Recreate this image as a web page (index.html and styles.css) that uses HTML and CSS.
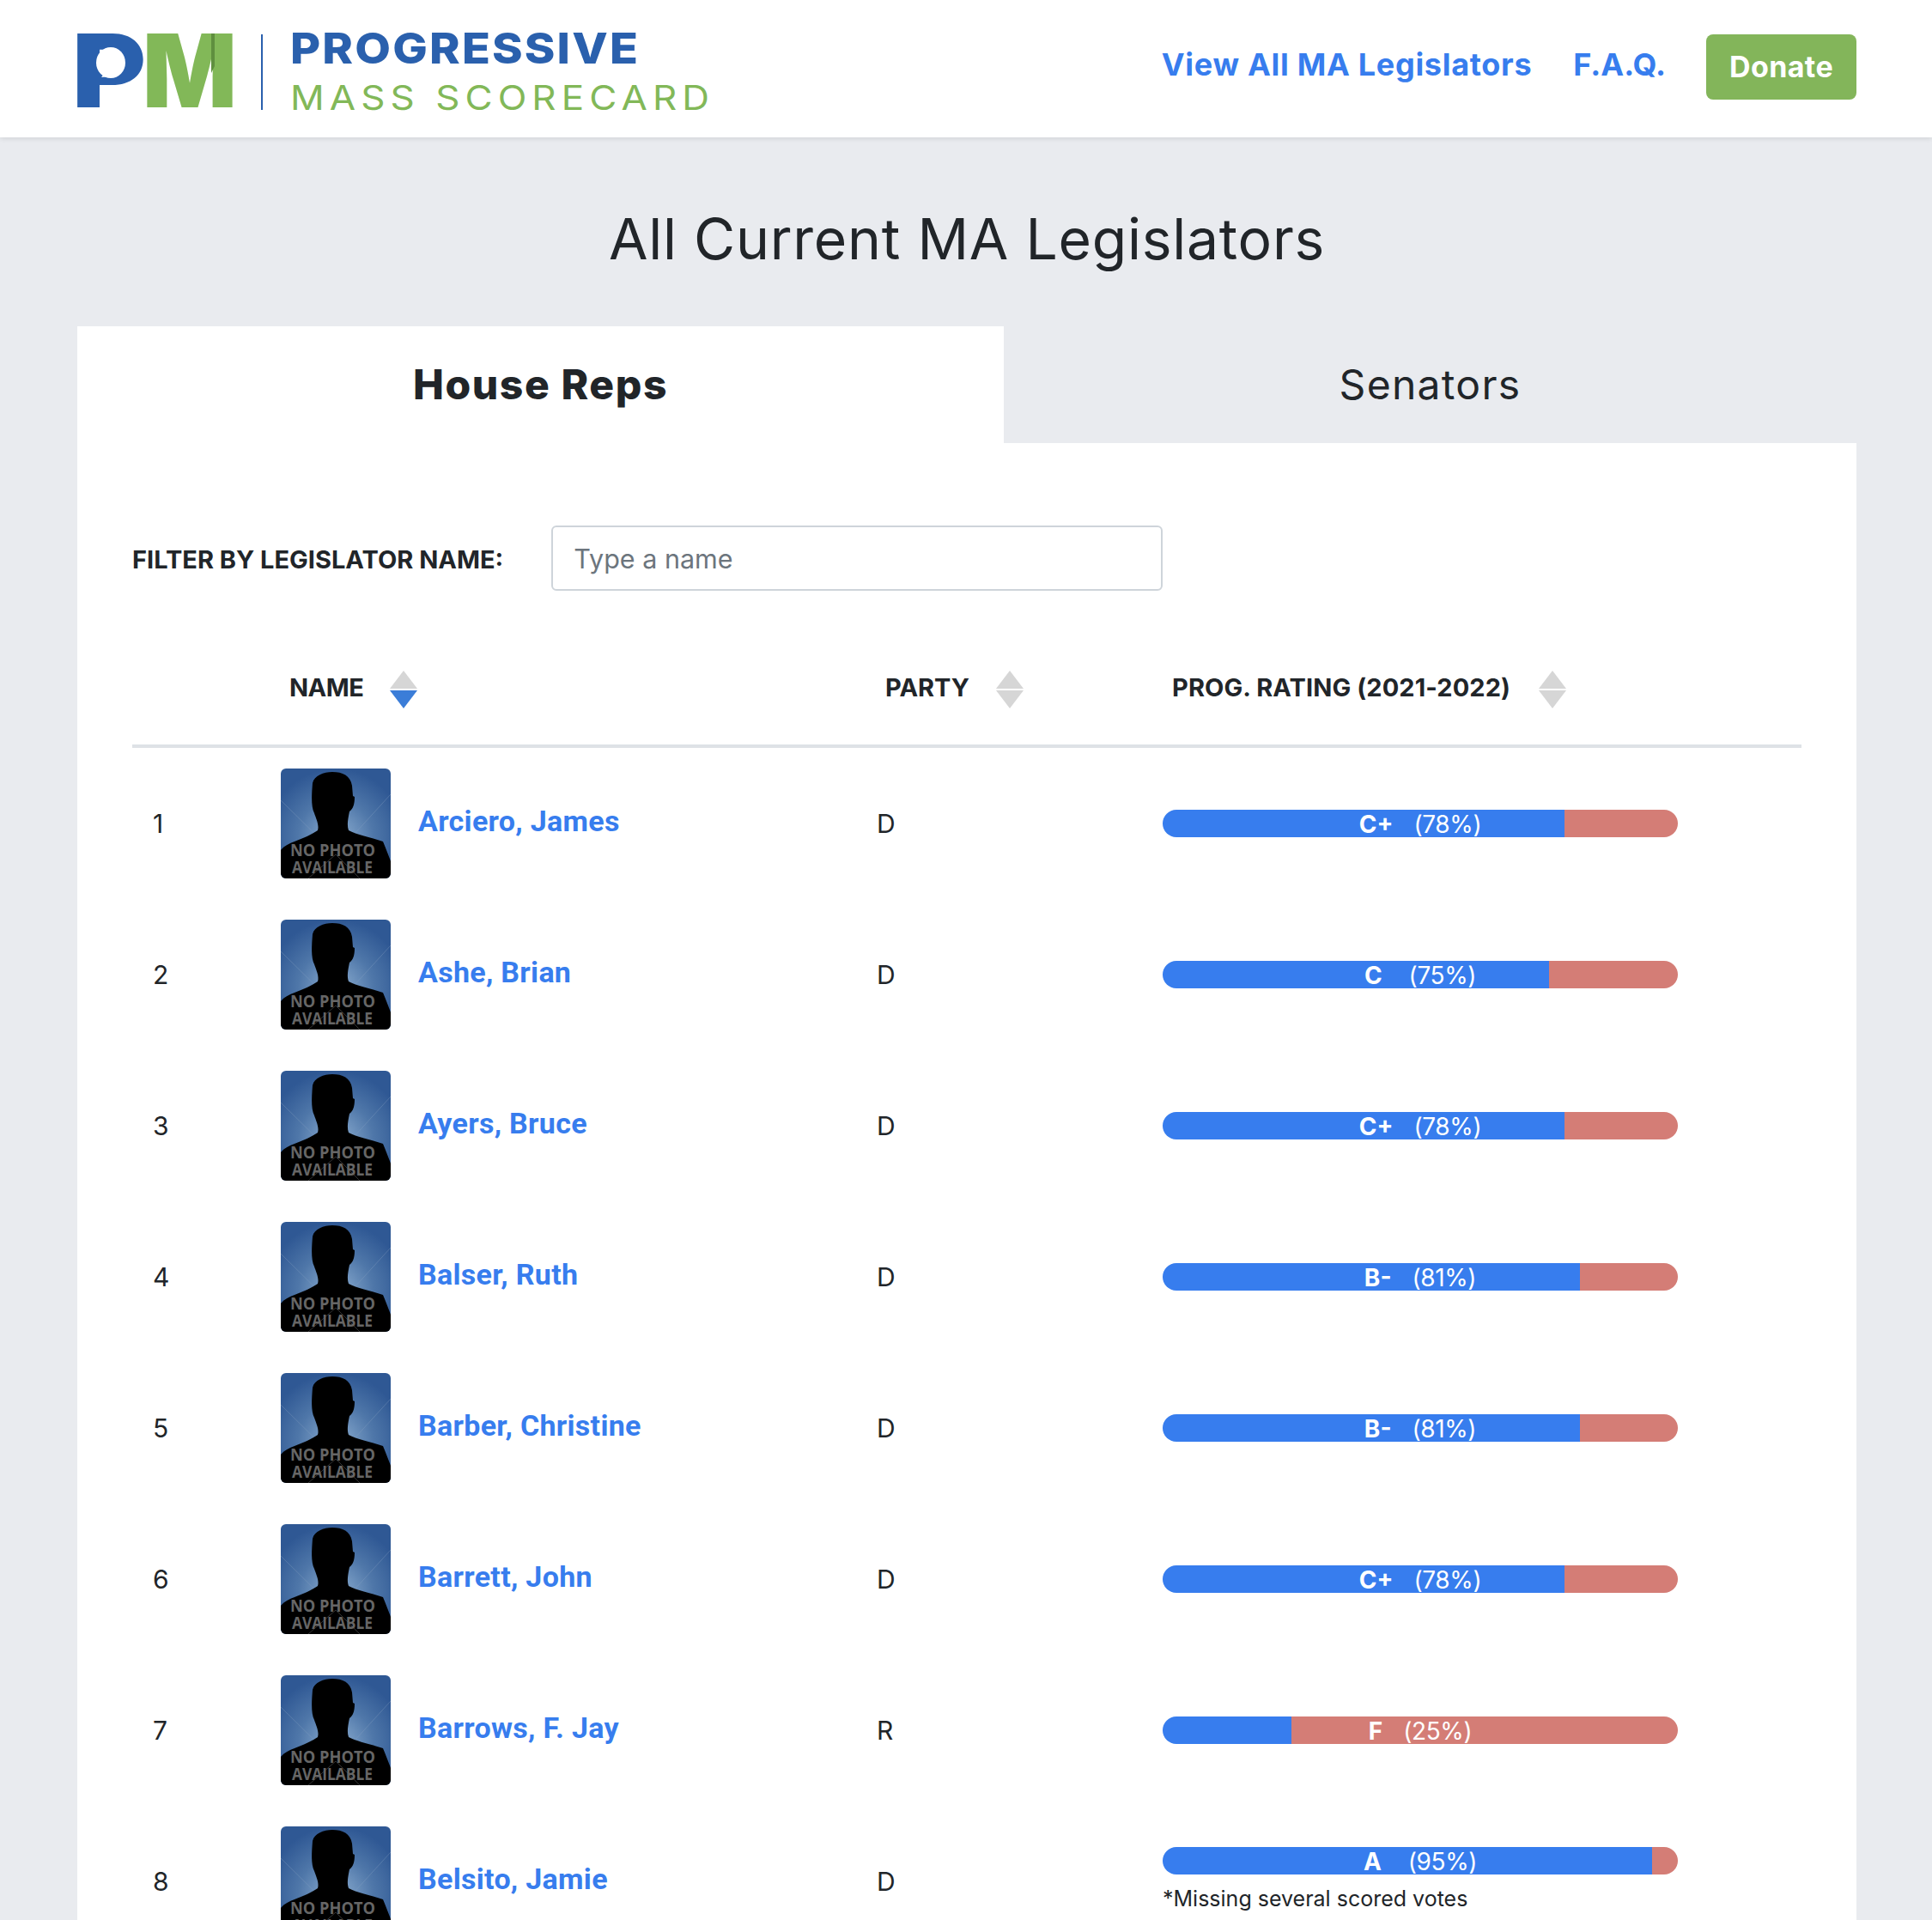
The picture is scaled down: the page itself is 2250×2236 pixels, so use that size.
FILE: index.html
```html
<!DOCTYPE html>
<html lang="en">
<head>
  <meta charset="UTF-8" />
  <title>All Current MA Legislators</title>
  <link rel="stylesheet" href="styles.css">
</head>
<body>
  <svg class="defs" width="0" height="0">
    <defs>
      <radialGradient id="glow" cx="50%" cy="62%" r="62%">
        <stop offset="0%" stop-color="#8fb0d2" />
        <stop offset="55%" stop-color="#4f77a9" />
        <stop offset="100%" stop-color="#2f5894" />
      </radialGradient>
      <symbol id="nophoto" viewBox="0 0 128 128">
        <rect width="128" height="128" fill="url(#glow)" />
        <path d="M0 37 L64 100 L128 30" stroke="#8aa3c4" stroke-opacity=".35" fill="none" />
        <path d="M37 17 C39 8 50 4 60 4 C72 4 81 8 83 20 L84 32 L86 33 C86 42 84 47 80 50 C78 60 77 66 79 72 C88 77 104 80 119 85 C122 92 125 100 128 108 V128 H0 V95 C4 90 10 87 16 85 C26 81 36 77 43 72 C45 66 41 58 39 52 C35 44 36 30 37 17 Z" fill="#000" />
        <path d="M32 128 L64 100 L92 128" stroke="#333" fill="none" />
        <text class="nophoto-text" x="11" y="102" textLength="99" lengthAdjust="spacingAndGlyphs">NO PHOTO</text>
        <text class="nophoto-text" x="13" y="122" textLength="94" lengthAdjust="spacingAndGlyphs">AVAILABLE</text>
      </symbol>
    </defs>
  </svg>

  <header class="topbar">
    <a class="logo" href="#">
      <svg class="logo-mark" width="194" height="150" viewBox="0 0 194 150">
        <text class="mark-p" x="0" y="120" textLength="86" lengthAdjust="spacingAndGlyphs">P</text>
        <ellipse cx="45" cy="68" rx="17" ry="18" fill="#fff" />
        <path d="M30 72 L38 80 L34 85 L46 84 Z" fill="#fff" />
        <text class="mark-m" x="82" y="120" textLength="110" lengthAdjust="spacingAndGlyphs">M</text>
        <path d="M162 34 L166 34 L166 72 L162 80 Z" fill="#5f8f3f" />
      </svg>
      <span class="logo-rule"></span>
      <span class="logo-words">
        <span class="logo-top">PROGRESSIVE</span>
        <span class="logo-bottom">MASS SCORECARD</span>
      </span>
    </a>
    <nav class="topnav">
      <a href="#">View All MA Legislators</a>
      <a class="faq" href="#">F.A.Q.</a>
      <a class="donate" href="#">Donate</a>
    </nav>
  </header>

  <main class="page">
    <h1>All Current MA Legislators</h1>

    <div class="tabs">
      <div class="tab active">House Reps</div>
      <div class="tab">Senators</div>
    </div>

    <section class="card">
      <div class="filter">
        <label for="name">FILTER BY LEGISLATOR NAME:</label>
        <input id="name" type="text" placeholder="Type a name" />
      </div>

      <table class="legislators">
        <colgroup>
          <col class="col-num" /><col class="col-name" /><col class="col-party" /><col />
        </colgroup>
        <thead>
          <tr>
            <th></th>
            <th class="th-name">NAME<span class="sort"><i class="up"></i><i class="down on"></i></span></th>
            <th class="th-party">PARTY<span class="sort"><i class="up"></i><i class="down"></i></span></th>
            <th class="th-rating">PROG. RATING (2021-2022)<span class="sort"><i class="up"></i><i class="down"></i></span></th>
          </tr>
        </thead>
        <tbody>
          <tr>
            <td class="num">1</td>
            <td><div class="person"><svg class="photo"><use href="#nophoto" /></svg><a href="#">Arciero, James</a></div></td>
            <td>D</td>
            <td><div class="bar"><span class="yes" style="width:78%"></span><span class="no"></span><span class="bar-label"><b>C+</b><span>(78%)</span></span></div></td>
          </tr>
          <tr>
            <td class="num">2</td>
            <td><div class="person"><svg class="photo"><use href="#nophoto" /></svg><a href="#">Ashe, Brian</a></div></td>
            <td>D</td>
            <td><div class="bar"><span class="yes" style="width:75%"></span><span class="no"></span><span class="bar-label"><b class="pad">C</b><span>(75%)</span></span></div></td>
          </tr>
          <tr>
            <td class="num">3</td>
            <td><div class="person"><svg class="photo"><use href="#nophoto" /></svg><a href="#">Ayers, Bruce</a></div></td>
            <td>D</td>
            <td><div class="bar"><span class="yes" style="width:78%"></span><span class="no"></span><span class="bar-label"><b>C+</b><span>(78%)</span></span></div></td>
          </tr>
          <tr>
            <td class="num">4</td>
            <td><div class="person"><svg class="photo"><use href="#nophoto" /></svg><a href="#">Balser, Ruth</a></div></td>
            <td>D</td>
            <td><div class="bar"><span class="yes" style="width:81%"></span><span class="no"></span><span class="bar-label"><b>B-</b><span>(81%)</span></span></div></td>
          </tr>
          <tr>
            <td class="num">5</td>
            <td><div class="person"><svg class="photo"><use href="#nophoto" /></svg><a href="#">Barber, Christine</a></div></td>
            <td>D</td>
            <td><div class="bar"><span class="yes" style="width:81%"></span><span class="no"></span><span class="bar-label"><b>B-</b><span>(81%)</span></span></div></td>
          </tr>
          <tr>
            <td class="num">6</td>
            <td><div class="person"><svg class="photo"><use href="#nophoto" /></svg><a href="#">Barrett, John</a></div></td>
            <td>D</td>
            <td><div class="bar"><span class="yes" style="width:78%"></span><span class="no"></span><span class="bar-label"><b>C+</b><span>(78%)</span></span></div></td>
          </tr>
          <tr>
            <td class="num">7</td>
            <td><div class="person"><svg class="photo"><use href="#nophoto" /></svg><a href="#">Barrows, F. Jay</a></div></td>
            <td>R</td>
            <td><div class="bar"><span class="yes" style="width:25%"></span><span class="no"></span><span class="bar-label"><b>F</b><span>(25%)</span></span></div></td>
          </tr>
          <tr>
            <td class="num">8</td>
            <td><div class="person"><svg class="photo"><use href="#nophoto" /></svg><a href="#">Belsito, Jamie</a></div></td>
            <td>D</td>
            <td>
              <div class="bar"><span class="yes" style="width:95%"></span><span class="no"></span><span class="bar-label"><b class="pad">A</b><span>(95%)</span></span></div>
              <p class="note">*Missing several scored votes</p>
            </td>
          </tr>
        </tbody>
      </table>
    </section>
  </main>
</body>
</html>
```
FILE: styles.css
```css
* {
  padding: 0;
  margin: 0;
  box-sizing: border-box;
}
html {
  height: 2236px;
  overflow: hidden;
}
body {
  background-color: #e9ebef;
  color: #212529;
  font-family: Inter, "Liberation Sans", sans-serif;
}
a {
  text-decoration: none;
}
.defs {
  position: absolute;
}

/* top bar */
.topbar {
  display: flex;
  align-items: center;
  justify-content: space-between;
  height: 160px;
  padding: 0 88px 0 84px;
  background-color: #fff;
  box-shadow: 0 1px 6px rgba(0, 0, 0, .12);
}
.logo {
  display: flex;
  align-items: center;
}
.logo-mark {
  display: block;
}
.mark-p {
  font: 900 118px Inter, sans-serif;
  fill: #2a60ad;
}
.mark-m {
  font: 900 118px Inter, sans-serif;
  fill: #82b858;
}
.logo-rule {
  width: 2px;
  height: 88px;
  margin: 8px 32px 0 26px;
  background-color: #2a60ad;
}
.logo-words {
  display: flex;
  flex-direction: column;
  gap: 20px;
  margin-top: 6px;
}
.logo-top {
  font-size: 50px;
  line-height: 42px;
  font-weight: 800;
  letter-spacing: 2px;
  color: #2a60ad;
  transform: scaleX(1.08);
  transform-origin: left;
}
.logo-bottom {
  font-size: 40px;
  line-height: 34px;
  font-weight: 400;
  letter-spacing: 5.5px;
  color: #82b858;
  transform: scaleX(1.1);
  transform-origin: left;
}
.topnav {
  display: flex;
  align-items: center;
  gap: 48px;
  margin-bottom: 4px;
  font-size: 36px;
  font-weight: 700;
  letter-spacing: .7px;
}
.topnav a {
  margin-bottom: 7px;
  color: #377dee;
}
.topnav .faq {
  margin-right: -1px;
  letter-spacing: 0;
}
.topnav .donate {
  width: 175px;
  margin-bottom: 0;
  padding: 18px 0;
  border-radius: 8px;
  background-color: #83b55a;
  color: #fff;
  text-align: center;
  font-size: 34px;
  letter-spacing: .4px;
  line-height: 40px;
}

/* page */
.page {
  padding: 0 88px 0 90px;
}
h1 {
  height: 220px;
  padding-top: 76px;
  text-align: center;
  font-size: 66px;
  line-height: 84px;
  font-weight: 400;
  letter-spacing: .75px;
}
.tabs {
  display: grid;
  grid-template-columns: 1079px 1fr;
}
.tab {
  height: 136px;
  text-align: center;
  font-size: 48px;
  line-height: 135px;
  letter-spacing: 1.3px;
}
.tab.active {
  background-color: #fff;
  font-weight: 800;
  letter-spacing: 1.6px;
}
.card {
  padding: 96px 64px 0 64px;
  background-color: #fff;
}
.filter {
  display: flex;
  align-items: center;
  gap: 56px;
  margin-bottom: 42px;
}
.filter label {
  font-size: 29px;
  font-weight: 700;
  margin-top: 2px;
}
.filter input {
  width: 712px;
  height: 76px;
  padding: 0 24px;
  border: 2px solid #ced4da;
  border-radius: 6px;
  font: 400 30.5px Inter, sans-serif;
  color: #212529;
}
.filter input::placeholder {
  color: #6c757d;
  opacity: 1;
}

/* table */
.legislators {
  width: 100%;
  table-layout: fixed;
  border-collapse: separate;
  border-spacing: 0;
}
.col-num {
  width: 157px;
}
.col-name {
  width: 694px;
}
.col-party {
  width: 333px;
}
.legislators th {
  height: 141px;
  padding-top: 8px;
  border-bottom: 4px solid #dee2e6;
  text-align: left;
  font-size: 29px;
  font-weight: 700;
  white-space: nowrap;
}
.th-name {
  padding-left: 26px;
  letter-spacing: -.5px;
}
.th-party {
  padding-left: 26px;
}
.th-rating {
  padding-left: 27px;
  letter-spacing: .1px;
}
.sort {
  display: inline-flex;
  flex-direction: column;
  gap: 2px;
  margin-left: 31px;
  vertical-align: middle;
}
.th-party .sort {
  margin-left: 31px;
}
.th-rating .sort {
  margin-left: 33px;
}
.sort i {
  display: block;
  width: 0;
  height: 0;
  border-left: 16px solid transparent;
  border-right: 16px solid transparent;
}
.sort .up {
  border-bottom: 21px solid #d6d6d6;
}
.sort .down {
  border-top: 21px solid #d6d6d6;
}
.sort .down.on {
  border-top-color: #3b7dd8;
}
.legislators td {
  height: 176px;
  padding: 0 16px;
  font-size: 30px;
  vertical-align: middle;
}
.legislators td.num {
  padding-left: 24px;
}
.person {
  display: flex;
  align-items: center;
  gap: 32px;
}
.person a {
  margin-bottom: 6px;
  font-family: Roboto, sans-serif;
  font-size: 34px;
  font-weight: 700;
  letter-spacing: .3px;
  color: #377dee;
}
.photo {
  display: block;
  width: 128px;
  height: 128px;
  border-radius: 6px;
}
.nophoto-text {
  font: 700 19px "Open Sans", sans-serif;
  fill: #666;
}
.bar {
  position: relative;
  display: flex;
  width: 600px;
  height: 32px;
}
.yes {
  border-radius: 16px 0 0 16px;
  background-color: #377dee;
}
.no {
  flex: 1;
  border-radius: 0 16px 16px 0;
  background-color: #d47d76;
}
.bar-label {
  position: absolute;
  top: 0;
  left: 0;
  right: 0;
  display: flex;
  justify-content: center;
  gap: 24px;
  color: #fff;
  font-size: 28px;
  line-height: 34px;
}
.bar-label span {
  letter-spacing: -.4px;
}
.bar-label b.pad {
  margin-right: 7px;
}
.note {
  margin: 11px 0 4px;
  font-size: 25px;
  line-height: 34px;
}
```
